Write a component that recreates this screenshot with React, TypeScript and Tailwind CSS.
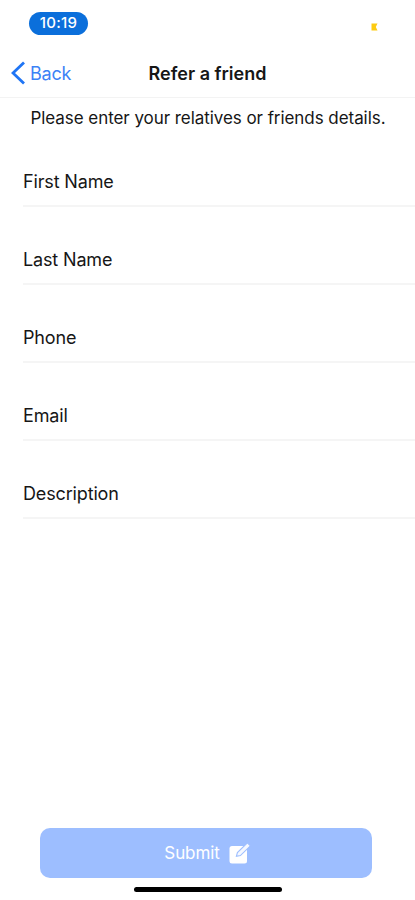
const fields = ["First Name", "Last Name", "Phone", "Email", "Description"];

function StatusBar() {
  return (
    <div className="flex h-[46px] items-center justify-between pl-[29px] pr-[37px]">
      <div className="flex h-[23px] w-[59px] items-center justify-center rounded-full bg-[#0b6fdb] pt-px text-[15px] font-medium tracking-[0.3px] text-white">
        10:19
      </div>
      {/* Battery level */}
      <svg width="7" height="8" viewBox="0 0 7 8" className="mt-2">
        <path d="M0.5 0.5H6.5L4.8 4L6.5 7.5H0.5Z" fill="#fdcb12" />
      </svg>
    </div>
  );
}

function Header() {
  return (
    <header className="grid h-[52px] grid-cols-[1fr_auto_1fr] items-center border-b border-[#f3f3f3] pb-px pt-1">
      <button className="flex items-center gap-[5px] pl-[11px] text-[18px] tracking-[-0.2px] text-[#3b82f6]">
        <svg width="14" height="24" viewBox="0 0 14 24" fill="none">
          <path d="M13 1.5L2 12L13 22.5" stroke="#1f75f5" strokeWidth="2.8" />
        </svg>
        Back
      </button>
      <h1 className="text-[18px] font-semibold">Refer a friend</h1>
    </header>
  );
}

function Field({ label }: { label: string }) {
  return (
    <div className="ml-[23px] flex h-[78px] items-end border-b-2 border-[#f5f5f5] pb-[10px]">
      <label className="text-[18px] leading-[27px] tracking-[-0.15px]">{label}</label>
    </div>
  );
}

export default function App() {
  return (
    <div className="flex h-[900px] w-full flex-col overflow-hidden bg-white font-['Inter',sans-serif] text-[#161616]">
      <StatusBar />
      <Header />

      <p className="h-[31px] whitespace-nowrap pl-[30.5px] pt-[7px] text-[17px] leading-[26px] tracking-[-0.06px]">
        Please enter your relatives or friends details.
      </p>

      <form className="flex flex-1 flex-col">
        {fields.map((label) => (
          <Field key={label} label={label} />
        ))}

        {/* Submit */}
        <button
          type="button"
          className="ml-10 mt-auto flex h-[50px] w-[332px] items-center justify-center gap-[9px] rounded-[10px] bg-[#9dbeff] pl-[3px] pt-0.5 text-[17px] tracking-[-0.1px] text-white"
        >
          Submit
          <svg width="22" height="22" viewBox="0 0 22 22" fill="none">
            <rect x="0.5" y="3" width="17.5" height="17.5" rx="2.5" fill="white" />
            <path d="M7.4 13.4L8.4 9.6L18.4 -0.2L21.4 2.8L11.4 12.6Z" fill="#f5f8ff" stroke="#9dbeff" strokeWidth="1.1" />
          </svg>
        </button>
      </form>

      {/* Home indicator */}
      <div className="mx-auto mb-2 mt-[9px] h-[5px] w-[148px] shrink-0 rounded-full bg-black" />
    </div>
  );
}
